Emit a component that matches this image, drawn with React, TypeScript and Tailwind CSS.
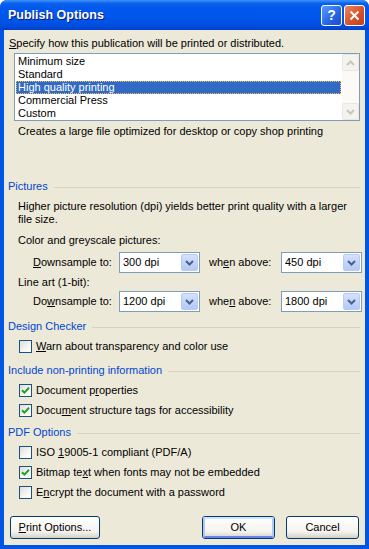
import type { ReactNode } from 'react'

const FONT = { fontFamily: '"Liberation Sans", Arial, sans-serif' }

const PRESETS = ['Minimum size', 'Standard', 'High quality printing', 'Commercial Press', 'Custom']

// label with a mnemonic underline at index i
function Mn({ text, i }: { text: string; i: number }) {
  return (
    <>
      {text.slice(0, i)}
      <span className="underline underline-offset-[1px]">{text[i]}</span>
      {text.slice(i + 1)}
    </>
  )
}

function Group({ title, className = '' }: { title: string; className?: string }) {
  return (
    <div className={`flex items-center gap-[6px] pl-[4px] pr-[5px] h-[13px] ${className}`}>
      <span className="text-[#0046D5]">{title}</span>
      <div className="flex-1 h-px bg-[#D5D2C0] mt-px" />
    </div>
  )
}

function Check({ checked, children }: { checked?: boolean; children: ReactNode }) {
  return (
    <div className="flex items-center gap-[4px] pl-[15px] h-[19px]">
      <span className="w-[13px] h-[13px] border border-[#1C5180] bg-[linear-gradient(135deg,#DCDCD7,#F6F6F4_60%,#FFFFFF)] flex items-center justify-center">
        {checked && (
          <svg width="9" height="9" viewBox="0 0 9 9">
            <path d="M1 4.2 L3.4 6.6 L8 1.8" stroke="#21A121" strokeWidth="2" fill="none" />
          </svg>
        )}
      </span>
      <span>{children}</span>
    </div>
  )
}

function Combo({ value }: { value: string }) {
  return (
    <div className="w-[81px] h-[21px] border border-[#7F9DB9] bg-white flex items-center p-px">
      <span className="flex-1 pl-[2px]">{value}</span>
      <span className="w-[17px] h-[17px] rounded-[2px] border border-[#B9CAF3] bg-[linear-gradient(#D6E2FC,#C2D4FA_50%,#B4C9F6)] flex items-center justify-center">
        <svg width="9" height="6" viewBox="0 0 9 6">
          <path d="M1 1 L4.5 4.5 L8 1" stroke="#4D6185" strokeWidth="2" fill="none" />
        </svg>
      </span>
    </div>
  )
}

function ScrollArrow({ up }: { up?: boolean }) {
  return (
    <span className="w-[17px] h-[17px] rounded-[2px] border border-[#E8E8E0] bg-[#F4F3EE] flex items-center justify-center">
      <svg width="9" height="6" viewBox="0 0 9 6">
        <path d={up ? 'M1 5 L4.5 1.5 L8 5' : 'M1 1 L4.5 4.5 L8 1'} stroke="#C9C7BA" strokeWidth="2" fill="none" />
      </svg>
    </span>
  )
}

function Btn({ children, def, className = '' }: { children: ReactNode; def?: boolean; className?: string }) {
  return (
    <div className={`h-[23px] rounded-[3px] border border-[#003C74] bg-[linear-gradient(#FFFFFF,#F4F3EE_70%,#D6D0C5)] flex items-center justify-center ${className}`}>
      <div className={`w-full h-full rounded-[2px] flex items-center justify-center ${def ? 'border-[2px] border-[#B2C8F3] border-t-[#CEE7FF] border-b-[#6982EE]' : ''}`}>
        {children}
      </div>
    </div>
  )
}

export default function App() {
  return (
    <div className="w-[369px] h-[549px] flex flex-col rounded-t-[7px] overflow-hidden bg-[#0055E5] text-[11px] leading-[13px] text-black" style={FONT}>
      {/* title bar */}
      <div className="h-[30px] shrink-0 flex items-center pl-[8px] pr-[4px] bg-[linear-gradient(#3D95FF,#0A5FEB_12%,#0058EE_30%,#0054E8_70%,#0049D9_92%,#003FC8)]">
        <span className="flex-1 text-white font-bold text-[12.5px] [text-shadow:1px_1px_#0A1883]">Publish Options</span>
        <div className="flex gap-[2px]">
          <div className="w-[21px] h-[21px] rounded-[3px] border border-white bg-[linear-gradient(135deg,#5B9BFF,#2663E6_60%,#1A4FCF)] flex items-center justify-center text-white font-bold text-[14px] leading-none">?</div>
          <div className="w-[21px] h-[21px] rounded-[3px] border border-white bg-[linear-gradient(135deg,#E9885F,#D9512B_55%,#C0401F)] flex items-center justify-center">
            <svg width="11" height="11" viewBox="0 0 11 11">
              <path d="M1.5 1.5 L9.5 9.5 M9.5 1.5 L1.5 9.5" stroke="white" strokeWidth="2" />
            </svg>
          </div>
        </div>
      </div>

      {/* body */}
      <div className="flex-1 mx-[4px] mb-[4px] bg-[#ECE9D8] flex flex-col">
        <div className="mt-[7px] pl-[5px]"><Mn text="Specify how this publication will be printed or distributed." i={0} /></div>

        <div className="mt-[3px] ml-[10px] mr-[5px] h-[68px] border border-[#7F9DB9] bg-white flex">
          <div className="flex-1 p-px flex flex-col">
            {PRESETS.map((p, i) => (
              <div
                key={p}
                className={`h-[13px] pl-[2px] ${i === 2 ? 'bg-[#316AC5] text-white outline-1 outline-dotted outline-[#F0C24A] -outline-offset-1' : ''}`}
              >
                {p}
              </div>
            ))}
          </div>
          <div className="w-[17px] flex flex-col justify-between bg-[#FBFAF6]">
            <ScrollArrow up />
            <ScrollArrow />
          </div>
        </div>

        <div className="mt-[4px] pl-[14px]">Creates a large file optimized for desktop or copy shop printing</div>

        <Group title="Pictures" className="mt-[42px]" />
        <div className="mt-[7px] pl-[14px] pr-[8px] leading-[13px]">
          Higher picture resolution (dpi) yields better print quality with a larger file size.
        </div>

        <div className="mt-[8px] pl-[14px]">Color and greyscale pictures:</div>
        <div className="mt-[5px] flex items-center pl-[29px]">
          <span className="w-[86px]"><Mn text="Downsample to:" i={0} /></span>
          <Combo value="300 dpi" />
          <span className="ml-[9px] w-[72px]"><Mn text="when above:" i={2} /></span>
          <Combo value="450 dpi" />
        </div>

        <div className="mt-[3px] pl-[14px]">Line art (1-bit):</div>
        <div className="mt-[2px] flex items-center pl-[29px]">
          <span className="w-[86px]"><Mn text="Downsample to:" i={2} /></span>
          <Combo value="1200 dpi" />
          <span className="ml-[9px] w-[72px]"><Mn text="when above:" i={3} /></span>
          <Combo value="1800 dpi" />
        </div>

        <Group title="Design Checker" className="mt-[8px]" />
        <div className="mt-[4px]">
          <Check><Mn text="Warn about transparency and color use" i={0} /></Check>
        </div>

        <Group title="Include non-printing information" className="mt-[8px]" />
        <div className="mt-[4px] flex flex-col gap-px">
          <Check checked><Mn text="Document properties" i={10} /></Check>
          <Check checked><Mn text="Document structure tags for accessibility" i={4} /></Check>
        </div>

        <Group title="PDF Options" className="mt-[6px]" />
        <div className="mt-[4px] flex flex-col gap-px">
          <Check><Mn text="ISO 19005-1 compliant (PDF/A)" i={4} /></Check>
          <Check checked><Mn text="Bitmap text when fonts may not be embedded" i={9} /></Check>
          <Check><Mn text="Encrypt the document with a password" i={1} /></Check>
        </div>

        <div className="mt-auto mb-[6px] flex items-center pl-[6px] pr-[6px]">
          <Btn className="w-[90px]"><Mn text="Print Options..." i={0} /></Btn>
          <div className="flex-1" />
          <Btn def className="w-[73px]">OK</Btn>
          <Btn className="w-[73px] ml-[11px]">Cancel</Btn>
        </div>
      </div>
    </div>
  )
}
